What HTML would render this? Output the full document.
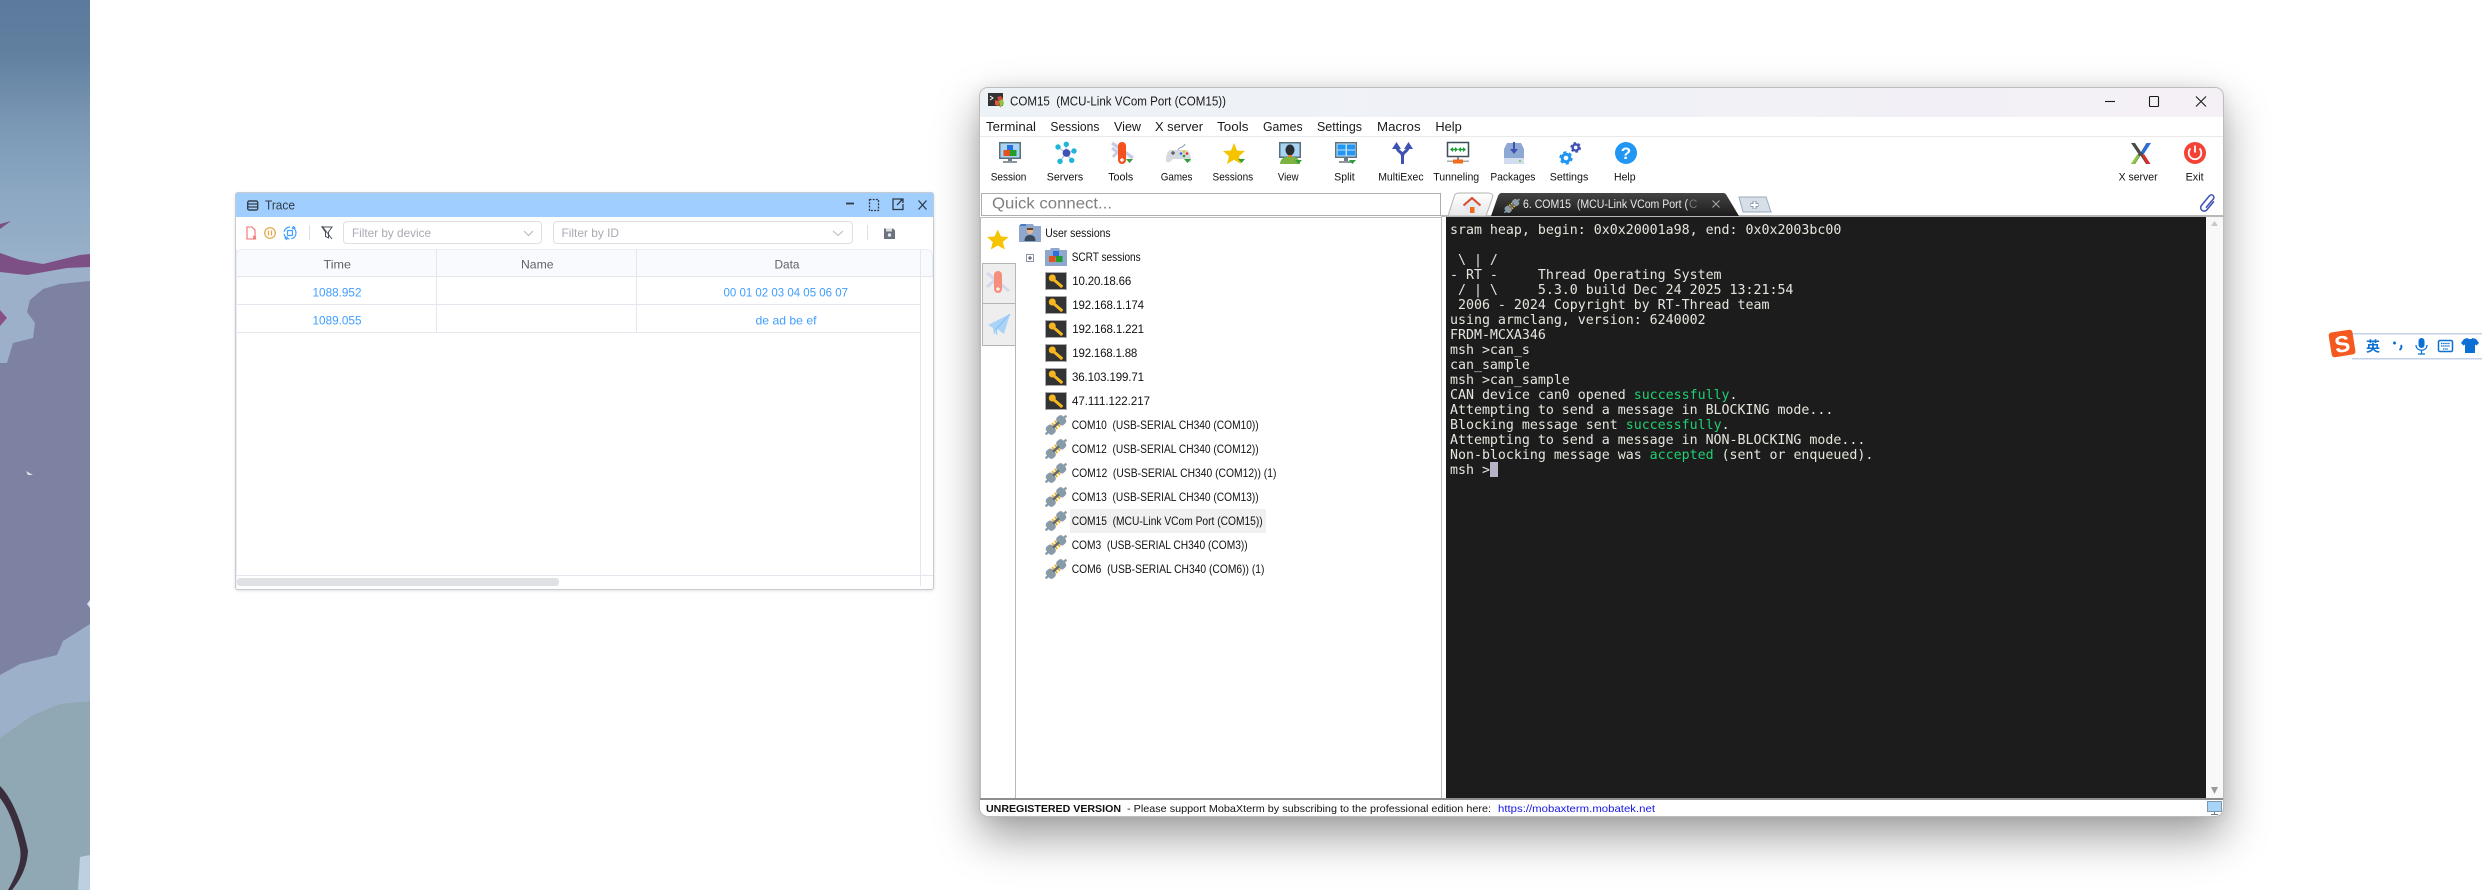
<!DOCTYPE html>
<html><head><meta charset="utf-8"><title>Trace and MobaXterm</title>
<style>
html,body{margin:0;padding:0;background:#fff;width:2482px;height:890px;overflow:hidden}
.a{position:absolute;box-sizing:border-box}
svg{position:absolute;left:0;top:0}
svg text{font-family:"Liberation Sans","Noto Sans CJK SC",sans-serif;white-space:pre}
pre{margin:0;position:absolute;left:1450px;top:223px;font:13.28px/15px "DejaVu Sans Mono","Liberation Mono",monospace;color:#e6e6de}
pre b{font-weight:normal;color:#20cf72}
</style></head><body>
<!-- Trace window -->
<div class="a" style="left:235px;top:192px;width:699px;height:398px;background:#fff;border:1px solid #c6cbd1;border-radius:3px;box-shadow:0 1px 3px rgba(0,0,0,.12)"></div>
<div class="a" style="left:236px;top:193px;width:697px;height:24px;background:#a0cfff"></div>
<div class="a" style="left:343px;top:221px;width:199px;height:23px;border:1px solid #dcdfe6;border-radius:4px"></div>
<div class="a" style="left:553px;top:221px;width:300px;height:23px;border:1px solid #dcdfe6;border-radius:4px"></div>
<div class="a" style="left:236px;top:249px;width:697px;height:28px;background:#f9fafe;border-radius:6px 6px 0 0;border:1px solid #ebeef5;border-bottom:0"></div>
<div class="a" style="left:236px;top:276px;width:697px;height:1px;background:#e4e7ed"></div>
<div class="a" style="left:236px;top:304px;width:685px;height:1px;background:#e4e7ed"></div>
<div class="a" style="left:236px;top:332px;width:685px;height:1px;background:#e4e7ed"></div>
<div class="a" style="left:436px;top:249px;width:1px;height:84px;background:#e4e7ed"></div>
<div class="a" style="left:636px;top:249px;width:1px;height:84px;background:#e4e7ed"></div>
<div class="a" style="left:920px;top:249px;width:1px;height:337px;background:#e4e7ed"></div>
<div class="a" style="left:236px;top:249px;width:1px;height:338px;background:#ebeef5"></div>
<div class="a" style="left:236px;top:575px;width:697px;height:1px;background:#e4e7ed"></div>
<div class="a" style="left:237px;top:578px;width:322px;height:8px;background:#dfe1e5;border-radius:3px"></div>

<!-- MobaXterm window -->
<div class="a" style="left:979px;top:87px;width:1245px;height:730px;background:#fff;border:1px solid #bdbdbd;border-radius:9px;box-shadow:0 20px 44px rgba(0,0,0,.38),0 0 14px rgba(0,0,0,.08);overflow:hidden">
 <div class="a" style="left:0;top:0;width:100%;height:29px;background:linear-gradient(90deg,#edf2f7,#f0f1f6 50%,#f4f0f6)"></div>
 <div class="a" style="left:0;top:48px;width:100%;height:1px;background:#e9e9e9"></div>
</div>
<div class="a" style="left:981px;top:193px;width:460px;height:23px;border:1px solid #adadad;background:#fff"></div>
<div class="a" style="left:980px;top:217px;width:462px;height:582px;border:1px solid #bcbcbc;border-bottom:0;background:#fff"></div>
<div class="a" style="left:982px;top:263px;width:34px;height:83px;background:#eeeeee;border:1px solid #b4b4b4;border-right:0"></div>
<div class="a" style="left:982px;top:303px;width:33px;height:1px;background:#b4b4b4"></div>
<div class="a" style="left:1015px;top:263px;width:1px;height:536px;background:#b8b8b8"></div>
<div class="a" style="left:1070px;top:509px;width:196px;height:24px;background:#f0f0f0"></div>
<div class="a" style="left:1441px;top:215px;width:782px;height:2px;background:#b8b8b8"></div>
<div class="a" style="left:1446px;top:217px;width:760px;height:581px;background:#1c1c1c"></div>
<div class="a" style="left:2206px;top:217px;width:17px;height:581px;background:#f8f8f8"></div>
<div class="a" style="left:980px;top:798px;width:1243px;height:2px;background:#8e8e8e"></div>
<div class="a" style="left:1490px;top:462px;width:8px;height:15px;background:#b4b4c6"></div>
<pre>sram heap, begin: 0x0x20001a98, end: 0x0x2003bc00

 \ | /
- RT -     Thread Operating System
 / | \     5.3.0 build Dec 24 2025 13:21:54
 2006 - 2024 Copyright by RT-Thread team
using armclang, version: 6240002
FRDM-MCXA346
msh >can_s
can_sample
msh >can_sample
CAN device can0 opened <b>successfully</b>.
Attempting to send a message in BLOCKING mode...
Blocking message sent <b>successfully</b>.
Attempting to send a message in NON-BLOCKING mode...
Non-blocking message was <b>accepted</b> (sent or enqueued).
msh &gt;</pre>

<svg width="2482" height="890" viewBox="0 0 2482 890">
<defs>
 <linearGradient id="sky" x1="0" y1="0" x2="0" y2="1"><stop offset="0" stop-color="#5c7a9d"/><stop offset=".06" stop-color="#617f9f"/><stop offset=".13" stop-color="#7896b3"/><stop offset=".22" stop-color="#8ca8c3"/><stop offset=".3" stop-color="#9ab1ca"/><stop offset="1" stop-color="#9ab1ca"/></linearGradient>
 <linearGradient id="dt" x1="0" y1="0" x2="0" y2="1"><stop offset="0" stop-color="#444"/><stop offset="1" stop-color="#1c1c1c"/></linearGradient>
 <linearGradient id="lt" x1="0" y1="0" x2="0" y2="1"><stop offset="0" stop-color="#fff"/><stop offset="1" stop-color="#e8e8e8"/></linearGradient>
 <g id="key"><rect x="0.5" y="0.5" width="21" height="17" fill="#333" stroke="#aaa"/><circle cx="7.300" cy="6" r="3.500" fill="#f5b820"/><path d="M8 7L17.300 15" stroke="#f5b820" stroke-width="3"/><path d="M13 13l1.500-2M15.500 15l1.500-2" stroke="#f5b820" stroke-width="1.400"/></g>
 <g id="plug"><g transform="rotate(-42 11 11)"><path d="M-3 11h4M21 11h4" stroke="#8a9ba8" stroke-width="2.400"/><rect x="0" y="6" width="8" height="10" rx="3" fill="#8a9ba8"/><rect x="14" y="6" width="8" height="10" rx="3" fill="#8a9ba8"/><path d="M9.300 7v8M12.700 7v8" stroke="#f0b62a" stroke-width="1.900"/><path d="M7 11h8" stroke="#5c6b76" stroke-width="2.600"/></g></g>
 <path id="dn" d="M0 0h7l-3.500 4z" fill="#2f9e34"/>
 <g id="mon"><rect x="0" y="0" width="22" height="17" fill="#58707e"/><rect x="1.500" y="1.500" width="19" height="14" fill="#a9d3f2"/><rect x="9" y="17" width="4" height="2" fill="#6b7d88"/><rect x="4" y="19" width="14" height="2" fill="#8a979f"/></g>
 <g id="gear"><circle r="3.800" fill="none" stroke="currentColor" stroke-width="3"/><circle r="5.600" fill="none" stroke="currentColor" stroke-width="2.200" stroke-dasharray="3.100 2.770"/></g>
</defs>

<!-- wallpaper -->
<rect x="0" y="0" width="90" height="890" fill="url(#sky)"/>
<path d="M0 272L27 276 67 268 90 267V890H0z" fill="#9db0ca"/>
<path d="M0 253L20 260 43 264 80 255 90 254V267L67 268 27 275 0 272z" fill="#7c4f85"/>
<path d="M0 224L11 221 0 229z" fill="#7c4f85"/>
<path d="M0 310L7 318 0 326z" fill="#8a4f85"/>
<path d="M90 281L60 284 43 289 30 300 27 312 35 323 33 338 13 343 7 363H0V675L20 664 57 655 63 641 90 624z" fill="#7d81a2"/>
<path d="M90 701L60 704 33 715 0 738V890H90z" fill="#8fa8b4"/>
<path d="M80 857L90 855V890H78z" fill="#bcd0e2"/>
<path d="M26 471L33 475 28 475z" fill="#dfe3ee"/>
<path d="M87 604L90 600V608z" fill="#dfe3ee"/>
<path d="M0 786C14 800 24 830 28 851C27 868 20 880 12 890H8C18 872 22 860 20 848C15 825 8 808 0 798z" fill="#3a2d3c"/>

<!-- Trace title -->
<g fill="none" stroke="#35404c" stroke-width="1.400"><rect x="247.700" y="201" width="10" height="9" rx="1.500"/></g><path d="M248 204h10M248 207h10" stroke="#35404c" stroke-width="1.300"/>
<text x="265" y="209.500" font-size="12.500" fill="#303a46" textLength="30" lengthAdjust="spacingAndGlyphs">Trace</text>
<path d="M846 203.500h8" stroke="#303a46" stroke-width="1.800"/>
<rect x="869.500" y="199.500" width="9" height="11" fill="none" stroke="#303a46" stroke-width="1.300" stroke-dasharray="2 1.200"/>
<path d="M901 201v-2h-8v10.500h10V204M897 205l6-6M899 199h4v4" fill="none" stroke="#303a46" stroke-width="1.300"/>
<path d="M918.500 200.500l8 9M926.500 200.500l-8 9" stroke="#303a46" stroke-width="1.300"/>

<!-- Trace toolbar -->
<path d="M247 227h5l3 3v9h-8z" fill="none" stroke="#f56c6c" stroke-width="1.100"/><path d="M253 236l3 3M256 236l-3 3" stroke="#f56c6c" stroke-width="1.100"/>
<circle cx="270" cy="233" r="5.300" fill="none" stroke="#e6a23c" stroke-width="1.200"/><path d="M268.500 230.500v5M271.500 230.500v5" stroke="#e6a23c" stroke-width="1.200"/>
<circle cx="290" cy="233" r="6" fill="none" stroke="#409eff" stroke-width="1.200" stroke-dasharray="8 2"/><rect x="287.500" y="230.500" width="5" height="5" rx="1" fill="none" stroke="#409eff" stroke-width="1.200"/><path d="M293 226l2 2-3 1M287 240l-2-2 3-1" fill="none" stroke="#409eff"/>
<rect x="309" y="225" width="1" height="15" fill="#dcdfe6"/>
<path d="M322 227h10l-3.500 5v6l-3-1.500v-4.500z" fill="none" stroke="#4a5058" stroke-width="1"/><path d="M322 226l10 13" stroke="#4a5058"/>
<text x="352" y="237" font-size="12" fill="#a8abb2" textLength="79" lengthAdjust="spacingAndGlyphs">Filter by device</text>
<path d="M524 231l4.500 4.500 4.500-4.500" fill="none" stroke="#b4b7bd"/>
<text x="561.500" y="237" font-size="12" fill="#a8abb2" textLength="57.500" lengthAdjust="spacingAndGlyphs">Filter by ID</text>
<path d="M833 231l5 4.500 5-4.500" fill="none" stroke="#b4b7bd"/>
<rect x="867" y="225" width="1" height="15" fill="#dcdfe6"/>
<path d="M884 228.500h9l2 2v8.500h-11z" fill="#6b7280"/><rect x="886" y="228.500" width="6" height="3" fill="#d8dade"/><circle cx="889.500" cy="235" r="1.700" fill="#e8e9ec"/>

<!-- Trace table text -->
<g font-size="12" fill="#606266" text-anchor="start">
<text x="323.500" y="268.500" textLength="27.500" lengthAdjust="spacingAndGlyphs">Time</text>
<text x="521" y="268.500" textLength="32.500" lengthAdjust="spacingAndGlyphs">Name</text>
<text x="774.500" y="268.500" textLength="25" lengthAdjust="spacingAndGlyphs">Data</text>
</g>
<g font-size="12" fill="#409eff">
<text x="312.500" y="296.500" textLength="49" lengthAdjust="spacingAndGlyphs">1088.952</text>
<text x="723.500" y="296.500" textLength="124.500" lengthAdjust="spacingAndGlyphs">00 01 02 03 04 05 06 07</text>
<text x="312.500" y="324.500" textLength="49" lengthAdjust="spacingAndGlyphs">1089.055</text>
<text x="755.500" y="324.500" textLength="61" lengthAdjust="spacingAndGlyphs">de ad be ef</text>
</g>

<!-- Moba title -->
<rect x="988" y="93" width="15" height="13" fill="#333"/><path d="M990 96l3 2-3 2" fill="none" stroke="#fff"/><path d="M997 97l4-1 2 3-4 3z" fill="#d04a3a"/><path d="M995 100l4 1v5l-4-1z" fill="#e6563a"/><path d="M999 101l4-2 1 5-4 4z" fill="#8cc63f"/>
<text x="1010" y="105.500" font-size="13" fill="#1a1a1a" textLength="216" lengthAdjust="spacingAndGlyphs">COM15  (MCU-Link VCom Port (COM15))</text>
<path d="M2105 101.500h10" stroke="#1a1a1a" stroke-width="1.100"/>
<rect x="2149.500" y="96.500" width="9" height="10" rx="1" fill="none" stroke="#1a1a1a" stroke-width="1.100"/>
<path d="M2196 96.500l10 10M2206 96.500l-10 10" stroke="#1a1a1a" stroke-width="1.100"/>

<!-- Menu -->
<g font-size="13" fill="#1a1a1a">
<text x="986" y="131" textLength="50" lengthAdjust="spacingAndGlyphs">Terminal</text>
<text x="1050.400" y="131" textLength="49" lengthAdjust="spacingAndGlyphs">Sessions</text>
<text x="1114" y="131" textLength="27" lengthAdjust="spacingAndGlyphs">View</text>
<text x="1155" y="131" textLength="48" lengthAdjust="spacingAndGlyphs">X server</text>
<text x="1217" y="131" textLength="31.500" lengthAdjust="spacingAndGlyphs">Tools</text>
<text x="1263" y="131" textLength="39.600" lengthAdjust="spacingAndGlyphs">Games</text>
<text x="1317" y="131" textLength="45" lengthAdjust="spacingAndGlyphs">Settings</text>
<text x="1377" y="131" textLength="43.600" lengthAdjust="spacingAndGlyphs">Macros</text>
<text x="1435.400" y="131" textLength="26.400" lengthAdjust="spacingAndGlyphs">Help</text>
</g>

<!-- Toolbar icons -->
<use href="#mon" x="999" y="142"/>
<rect x="1007" y="145" width="6" height="6" fill="#2a6fdc"/><rect x="1003.500" y="150" width="6.500" height="6" fill="#e2521d"/><rect x="1010" y="150" width="6.500" height="6" fill="#1f9e2c"/>

<g stroke="#9fb0d0" stroke-width="1"><path d="M1066 153L1058 147M1066 153V144.300M1066 153L1074 151M1066 153L1071.700 160.300M1066 153L1060 161.300"/></g>
<g fill="#1fb6d8"><circle cx="1058" cy="147" r="2.700"/><circle cx="1066.300" cy="144.300" r="2.700"/><circle cx="1074" cy="151" r="2.700"/><circle cx="1071.700" cy="160.300" r="2.700"/><circle cx="1060" cy="161.300" r="2.700"/></g>
<circle cx="1066.500" cy="153" r="3.900" fill="#3f51b5"/>

<path d="M1112 143l21 15" stroke="#c9cce8" stroke-width="3.500"/><path d="M1113 157l8-9M1112 148l8 6" stroke="#c9cce8" stroke-width="3"/>
<rect x="1118" y="142" width="8" height="22" rx="4" fill="#f4511e"/><path d="M1120 160h4M1122 158v4" stroke="#fff" stroke-width="1.400"/>
<use href="#dn" x="1126" y="159"/>

<path d="M1171 150h15c3 0 5 5 5 10 0 3-3 3-5 1l-2-2h-11l-2 2c-2 2-5 2-5-1 0-5 2-10 5-10z" fill="#d4dae0"/>
<path d="M1178 150c0-3 6-2 7-6" fill="none" stroke="#7a8894" stroke-width=".8"/>
<path d="M1171 153h4M1173 151v4" stroke="#555" stroke-width="1.300"/>
<circle cx="1181" cy="153.500" r="1.300" fill="#2a6fdc"/><circle cx="1184" cy="151.500" r="1.300" fill="#f5c400"/><circle cx="1187" cy="153.500" r="1.300" fill="#e03030"/><circle cx="1184" cy="156" r="1.300" fill="#2f9e34"/>
<use href="#dn" x="1184" y="159"/>

<path d="M1234 143l3 7.500 8 .5-6 5.200 2 7.800-7-4.300-7 4.300 2-7.800-6-5.200 8-.5z" fill="#f5c400"/>
<use href="#dn" x="1238" y="159"/>

<rect x="1279" y="142" width="22" height="16" fill="#58707e"/><rect x="1280.500" y="143.500" width="19" height="13" fill="#a9d3f2"/>
<ellipse cx="1290" cy="150" rx="4.500" ry="5.500" fill="#2a2f33"/><rect x="1288" y="155" width="4" height="2" fill="#e08020"/><path d="M1280 164c0-4 3-7 7-7h6c4 0 7 3 7 7z" fill="#7cb342"/>
<use href="#dn" x="1295" y="160"/>

<rect x="1335" y="142" width="22" height="16" fill="#5a7482"/><rect x="1336.500" y="143.500" width="19" height="13" fill="#c4e2f7"/><g fill="#2196f3"><rect x="1337.500" y="144.500" width="8" height="5"/><rect x="1347" y="144.500" width="8" height="5"/><rect x="1337.500" y="150.500" width="8" height="5"/><rect x="1347" y="150.500" width="8" height="5"/></g>
<rect x="1344" y="158" width="4" height="3" fill="#6b7d88"/><rect x="1339" y="161" width="14" height="2" fill="#8a979f"/><use href="#dn" x="1349" y="160"/>

<path d="M1402.500 164v-7c0-3-1-4-3-5.500-2-1.500-3-3-3-6M1402.500 157c0-3 1-4 3-5.500 2-1.500 3-3 3-6" fill="none" stroke="#3f51b5" stroke-width="3"/>
<path d="M1392 149l4.500-7 4.500 7zM1404 149l4.500-7 4.500 7z" fill="#3f51b5"/>

<rect x="1447.500" y="142.500" width="21" height="14" fill="#fff" stroke="#3e4f5a" stroke-width="1.500"/>
<path d="M1451 149.500h5M1460 149.500h5" stroke="#19a03a" stroke-width="1.600"/><path d="M1453 147l-3 2.500 3 2.500zM1463 147l3 2.500-3 2.500zM1455 147l3 2.500-3 2.500zM1461 147l-3 2.500 3 2.500z" fill="#19a03a"/>
<rect x="1457" y="157" width="2" height="3" fill="#888"/><rect x="1447" y="160.500" width="22" height="1.500" fill="#aaa"/><rect x="1453" y="159.500" width="10" height="4" fill="#f26b1d"/>

<path d="M1507 143h14l3 6v15h-20v-15z" fill="#8ea8d4"/><rect x="1504" y="158" width="20" height="6" rx="1" fill="#d2deef"/><circle cx="1520" cy="161" r="1" fill="#5cc840"/>
<path d="M1514 142v9" stroke="#3f51b5" stroke-width="2"/><path d="M1510 149l4 5 4-5z" fill="#3f51b5"/>

<use href="#gear" x="1566" y="158" color="#2196f3"/><use href="#gear" transform="translate(1575.700 147.500) scale(.8)" color="#3f51b5"/>

<circle cx="1626" cy="153" r="11" fill="#2196f3"/><text x="1626" y="159" font-size="17" font-weight="bold" fill="#fff" text-anchor="middle">?</text>

<path d="M2131 143h4l6 9 5.500-9h4l-7.500 11.500 7 9.500h-4l-5.500-8.500-5.500 8.500h-4l7.500-10z" fill="#4a4a4a"/>
<path d="M2147 143h4l-7.500 11.500-2-2.500z" fill="#2a6fdc"/><path d="M2131 164l6.500-10 2 2.500-5 7.500z" fill="#8cc63f"/><path d="M2142 156l2-2 6.500 10h-4z" fill="#d92b2b"/>

<circle cx="2195" cy="153" r="11" fill="#f44336"/><path d="M2190.500 148.500a6.300 6.300 0 1 0 9 0" fill="none" stroke="#fff" stroke-width="1.800"/><path d="M2195 145.500v7" stroke="#fff" stroke-width="1.800"/>

<g font-size="11" fill="#111">
<text x="990.700" y="180.500" textLength="35.700" lengthAdjust="spacingAndGlyphs">Session</text>
<text x="1046.800" y="180.500" textLength="36.400" lengthAdjust="spacingAndGlyphs">Servers</text>
<text x="1108.200" y="180.500" textLength="25" lengthAdjust="spacingAndGlyphs">Tools</text>
<text x="1160.700" y="180.500" textLength="31.800" lengthAdjust="spacingAndGlyphs">Games</text>
<text x="1212.500" y="180.500" textLength="40.700" lengthAdjust="spacingAndGlyphs">Sessions</text>
<text x="1277.900" y="180.500" textLength="20.700" lengthAdjust="spacingAndGlyphs">View</text>
<text x="1334.300" y="180.500" textLength="20.400" lengthAdjust="spacingAndGlyphs">Split</text>
<text x="1378.200" y="180.500" textLength="45.400" lengthAdjust="spacingAndGlyphs">MultiExec</text>
<text x="1433.200" y="180.500" textLength="46" lengthAdjust="spacingAndGlyphs">Tunneling</text>
<text x="1490.400" y="180.500" textLength="45" lengthAdjust="spacingAndGlyphs">Packages</text>
<text x="1549.700" y="180.500" textLength="38.600" lengthAdjust="spacingAndGlyphs">Settings</text>
<text x="1614" y="180.500" textLength="21.600" lengthAdjust="spacingAndGlyphs">Help</text>
<text x="2118.600" y="180.500" textLength="39" lengthAdjust="spacingAndGlyphs">X server</text>
<text x="2185.600" y="180.500" textLength="18" lengthAdjust="spacingAndGlyphs">Exit</text>
</g>

<!-- Quick connect & tabs -->
<text x="992" y="208.500" font-size="15.500" fill="#808080" textLength="120" lengthAdjust="spacingAndGlyphs">Quick connect...</text>
<path d="M1448 216l6-19c1-3 2-4 5-4h29c3 0 4 1 5 3l-7 20z" fill="url(#lt)" stroke="#b4b4b4"/>
<path d="M1465 205l7-6 7 6v8h-14z" fill="#e4e9f2"/><path d="M1463.500 205.500l8.500-7.500 8.500 7.500" fill="none" stroke="#d84a2a" stroke-width="2"/><rect x="1470" y="207" width="4.500" height="6" fill="#f26b1d"/>
<path d="M1491 216l7-20c1-2 2-3 4-3h221c2 0 3 1 4 3l12 20z" fill="url(#dt)"/>
<g transform="translate(1504 198) scale(.72)"><use href="#plug"/></g>
<text x="1523" y="208" font-size="11.500" fill="#e8e8e8" textLength="165" lengthAdjust="spacingAndGlyphs">6. COM15  (MCU-Link VCom Port (</text>
<text x="1689" y="208" font-size="11.500" fill="#777">C</text>
<path d="M1712.500 200.500l7 7M1719.500 200.500l-7 7" stroke="#aaa" stroke-width="1"/>
<path d="M1739 197h27l5 15h-28z" fill="#d6dfe8" stroke="#9ab"/>
<path d="M1754.500 201v8M1750.500 205h8" stroke="#8b99a6" stroke-width="4"/><path d="M1754.500 201.500v7M1751 205h7" stroke="#fff" stroke-width="2"/>
<g transform="rotate(40 2208 203)"><path d="M2211.500 198v11a3.500 3.500 0 0 1-7 0V196.500a2.500 2.500 0 0 1 5 0V208" fill="none" stroke="#3f51b5" stroke-width="1.500"/></g>

<!-- Side tabs -->
<path d="M997.700 229.500l3.300 7 7.500.5-5.700 5 2 7.500-7-4-7 4 2-7.500-5.700-5 7.500-.5z" fill="#f5c400"/>
<path d="M987 273l22 18" stroke="#d4d8ea" stroke-width="3"/><path d="M987 287l8-7" stroke="#d4d8ea" stroke-width="3"/>
<rect x="994" y="271" width="8" height="22" rx="4" fill="#f58e7a"/><path d="M996 289h4M998 287v4" stroke="#fff" stroke-width="1.200"/>
<path d="M988 325l22-11-6 20-7-5-3 6-1-7z" fill="#a9d3f7"/><path d="M1010 314l-14 15 1 6" fill="none" stroke="#7ab8ea" stroke-width=".8"/>

<!-- Tree -->
<path d="M1019 226h5l1-2h8l1 2h7v16h-22z" fill="#8fa7cc"/><path d="M1019 226h7v-2h-5z" fill="#4a78c8"/>
<circle cx="1030" cy="231" r="3" fill="#e8b88a"/><path d="M1024.500 241c0-4 2-6 5.500-6s5.500 2 5.500 6z" fill="#3a4a5a"/><path d="M1027 228h6v2h-6z" fill="#6b4422"/>
<text x="1045.300" y="237" font-size="12" fill="#111" textLength="65.300" lengthAdjust="spacingAndGlyphs">User sessions</text>
<rect x="1026.500" y="254.500" width="7" height="7" fill="#fff" stroke="#8a96a3"/><path d="M1028 258h4M1030 256v4" stroke="#445"/>
<path d="M1045 250h5l1-2h8l1 2h7v16h-22z" fill="#8fa7cc"/>
<rect x="1053" y="251" width="6" height="6" fill="#2a6fdc"/><rect x="1049" y="256" width="6.500" height="6" fill="#e2521d"/><rect x="1056" y="256" width="6.500" height="6" fill="#1f9e2c"/>
<text x="1071.700" y="261" font-size="12" fill="#111" textLength="69" lengthAdjust="spacingAndGlyphs">SCRT sessions</text>
<use href="#key" x="1045" y="272"/><use href="#key" x="1045" y="296"/><use href="#key" x="1045" y="320"/><use href="#key" x="1045" y="344"/><use href="#key" x="1045" y="368"/><use href="#key" x="1045" y="392"/>
<g font-size="11.500" fill="#111">
<text x="1072.300" y="285" textLength="59" lengthAdjust="spacing">10.20.18.66</text>
<text x="1072.300" y="309" textLength="71.700" lengthAdjust="spacing">192.168.1.174</text>
<text x="1072.300" y="333" textLength="71.700" lengthAdjust="spacing">192.168.1.221</text>
<text x="1072.300" y="357" textLength="65" lengthAdjust="spacing">192.168.1.88</text>
<text x="1072" y="381" textLength="72" lengthAdjust="spacing">36.103.199.71</text>
<text x="1072" y="405" textLength="78" lengthAdjust="spacing">47.111.122.217</text>
</g>
<use href="#plug" x="1045" y="414"/><use href="#plug" x="1045" y="438"/><use href="#plug" x="1045" y="462"/><use href="#plug" x="1045" y="486"/><use href="#plug" x="1045" y="510"/><use href="#plug" x="1045" y="534"/><use href="#plug" x="1045" y="558"/>
<g font-size="12" fill="#111">
<text x="1071.700" y="429" textLength="187" lengthAdjust="spacingAndGlyphs">COM10  (USB-SERIAL CH340 (COM10))</text>
<text x="1071.700" y="453" textLength="187" lengthAdjust="spacingAndGlyphs">COM12  (USB-SERIAL CH340 (COM12))</text>
<text x="1071.700" y="477" textLength="204.700" lengthAdjust="spacingAndGlyphs">COM12  (USB-SERIAL CH340 (COM12)) (1)</text>
<text x="1071.700" y="501" textLength="187" lengthAdjust="spacingAndGlyphs">COM13  (USB-SERIAL CH340 (COM13))</text>
<text x="1071.700" y="525" textLength="191" lengthAdjust="spacingAndGlyphs">COM15  (MCU-Link VCom Port (COM15))</text>
<text x="1071.700" y="549" textLength="176" lengthAdjust="spacingAndGlyphs">COM3  (USB-SERIAL CH340 (COM3))</text>
<text x="1071.700" y="573" textLength="192.700" lengthAdjust="spacingAndGlyphs">COM6  (USB-SERIAL CH340 (COM6)) (1)</text>
</g>

<!-- Scrollbar arrows -->
<path d="M2211 787h7l-3.500 7z" fill="#9a9a9a"/><path d="M2211 226h7l-3.500-5z" fill="#c8c8c8"/>

<!-- Status -->
<text x="986" y="812" font-size="10.500" font-weight="bold" fill="#111" textLength="135" lengthAdjust="spacingAndGlyphs">UNREGISTERED VERSION</text>
<text x="1127" y="812" font-size="10.500" fill="#111" textLength="364" lengthAdjust="spacingAndGlyphs">- Please support MobaXterm by subscribing to the professional edition here:</text>
<text x="1498" y="812" font-size="10.500" fill="#1414e6" textLength="157" lengthAdjust="spacingAndGlyphs">https://mobaxterm.mobatek.net</text>
<rect x="2207.500" y="801.500" width="14" height="10" fill="#a8d4f8" stroke="#7c98ac"/><path d="M2214.500 812v2M2211 814.500h7" stroke="#6b7d88"/>

<!-- Sogou IME -->
<rect x="2352" y="333" width="130" height="1.500" fill="#c3d2ea"/><rect x="2352" y="358" width="130" height="1.500" fill="#c3d2ea"/>
<rect x="2330" y="331" width="24" height="25" rx="3" fill="#f4591f" transform="rotate(-9 2342 343)"/>
<text x="2342" y="352" font-size="23" font-weight="bold" fill="#fff" text-anchor="middle" transform="rotate(-9 2342 343)">S</text>
<text x="2373" y="351.500" font-size="14" font-weight="bold" fill="#0b6fd4" text-anchor="middle">英</text>
<circle cx="2394.500" cy="343" r="1.500" fill="#0b6fd4"/><path d="M2401 345c1 2 0 4-1.500 5" fill="none" stroke="#0b6fd4" stroke-width="2"/>
<rect x="2418.500" y="338" width="6" height="10" rx="3" fill="#0b6fd4"/><path d="M2416 345c0 7 11 7 11 0M2421.500 350v3.500M2418 354h7" fill="none" stroke="#0b6fd4" stroke-width="1.200"/>
<rect x="2438.500" y="340.500" width="14" height="11" rx="1.500" fill="none" stroke="#0b6fd4" stroke-width="1.500"/><path d="M2441 343.500h9M2441 346h9M2443 349h5" stroke="#0b6fd4" stroke-width="1.300" stroke-dasharray="1.500 .6"/>
<path d="M2464 339l3.500-1c1 1.500 4 1.500 5 0l3.500 1 3 4-2.500 2.500-1.500-1V353h-10v-8.500l-1.500 1L2461 343z" fill="#0b6fd4"/>
</svg>
</body></html>
